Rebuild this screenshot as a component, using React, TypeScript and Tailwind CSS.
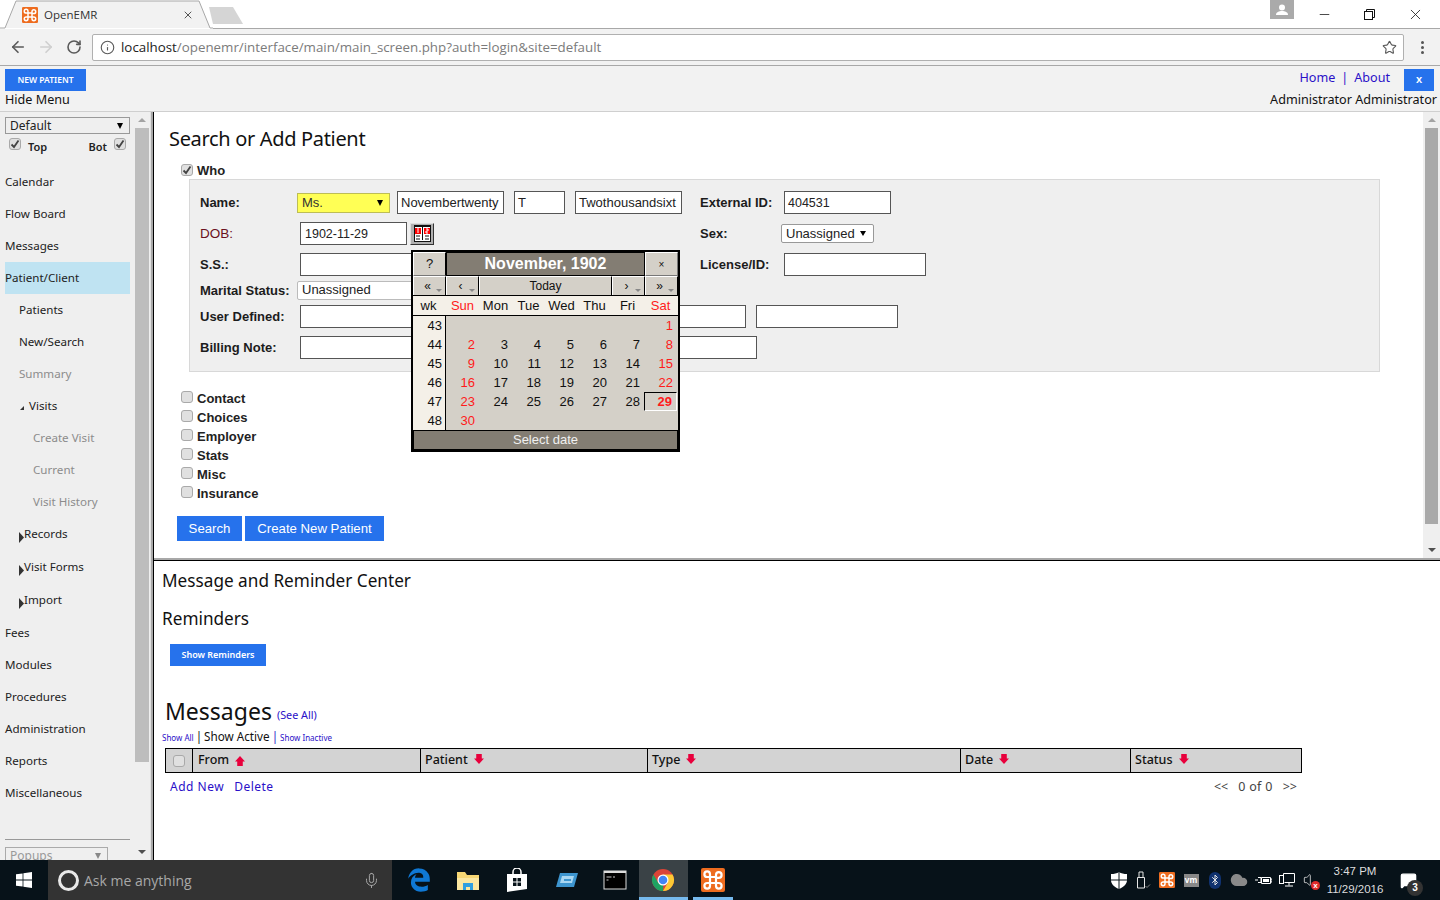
import { ReactNode } from "react";
import { FaEdgeLegacy } from "react-icons/fa";
import {
  ArrowLeft,
  ArrowRight,
  Bluetooth,
  Cloud,
  Info,
  Mic,
  MessageSquare,
  Minus,
  RotateCw,
  Star,
  Volume,
  X,
} from "lucide-react";

const ubuntu = "font-['Noto_Sans',sans-serif]";
const arial = "font-['Liberation_Sans',Arial,sans-serif]";

const weeks = [
  ["43", "", "", "", "", "", "", "1"],
  ["44", "2", "3", "4", "5", "6", "7", "8"],
  ["45", "9", "10", "11", "12", "13", "14", "15"],
  ["46", "16", "17", "18", "19", "20", "21", "22"],
  ["47", "23", "24", "25", "26", "27", "28", "29"],
  ["48", "30", "", "", "", "", "", ""],
];

const Check = ({ on = false }: { on?: boolean }) => (
  <span className="flex h-[12px] w-[12px] shrink-0 items-center justify-center rounded-[3px] border border-[#a9a9a9] bg-[#e0e0e0]">
    {on && (
      <svg width="10" height="10" viewBox="0 0 10 10">
        <path d="M1.5 5.5 4 8l4.5-6.5" fill="none" stroke="#444" strokeWidth="1.8" />
      </svg>
    )}
  </span>
);

const NavRow = ({
  label,
  indent = 0,
  muted = false,
  active = false,
  arrow = false,
  h = "h-[32px]",
}: {
  label: string;
  indent?: number;
  muted?: boolean;
  active?: boolean;
  arrow?: boolean;
  h?: string;
}) => {
  const pad =
    indent === 0 ? "pl-[5px]" : indent === 1 ? "pl-[19px]" : "pl-[33px]";
  return (
    <div
      className={`flex ${h} w-[125px] shrink-0 items-center ${active ? "pl-0" : pad} text-[11.6px] ${
        muted ? "text-[#8c8c8c]" : "text-[#222]"
      } ${active ? "bg-[#bfe3f2]" : ""}`}
    >
      {arrow && (
        <svg width="5" height="11" viewBox="0 0 5 11" className="mt-[5px] shrink-0">
          <path d="M0 0l5 5.5L0 11z" fill="#333" />
        </svg>
      )}
      <span className={arrow ? "-mt-[2px]" : ""}>{label}</span>
    </div>
  );
};

const Scrollbar = ({ thumb, wide = false }: { thumb: string; wide?: boolean }) => (
  <div className={`flex h-full shrink-0 flex-col items-center bg-[#efefef] ${wide ? "w-[17px]" : "w-[14px]"}`}>
    <span className="mt-[6px] h-0 w-0 border-x-[4px] border-b-[4px] border-x-transparent border-b-[#a3a3a3]" />
    <div className={`mt-[6px] ${thumb}`} />
    <span className="mt-auto mb-[6px] h-0 w-0 border-x-[4px] border-t-[4px] border-x-transparent border-t-[#505050]" />
  </div>
);

const Input = ({
  value = "",
  w,
  size = "pl-[3px] text-[13px]",
}: {
  value?: string;
  w: string;
  size?: string;
}) => (
  <span
    className={`flex h-[23px] ${w} shrink-0 items-center border border-[#555] bg-white ${size} text-[#222]`}
  >
    {value}
  </span>
);

const Label = ({
  children,
  red = false,
  low = false,
}: {
  children: ReactNode;
  red?: boolean;
  low?: boolean;
}) => (
  <span
    className={`w-[100px] shrink-0 ${low ? "pt-[2px]" : ""} ${
      red ? "text-[13.5px] text-[#6b1020]" : "text-[13px] font-bold text-[#1c1c1c]"
    }`}
  >
    {children}
  </span>
);

const Calendar = () => (
  <div
    className={`absolute top-[138px] left-[257px] w-[269px] border-2 border-black bg-[#d4d0c8] ${arial} text-[13px] text-[#111]`}
  >
    <div className="flex h-[24px]">
      <div className="flex w-[33px] items-center justify-center border border-t-white border-r-black border-b-[#777] border-l-white">?</div>
      <div className="flex flex-1 items-center justify-center border border-black bg-[#837d73] text-[16px] font-bold text-white">
        November, 1902
      </div>
      <div className="flex w-[33px] items-center justify-center border border-t-white border-r-[#777] border-b-[#777] border-l-white text-[10px]">×</div>
    </div>
    <div className="flex h-[20px] border-b border-black text-[12px]">
      {["«", "‹"].map((s) => (
        <div key={s} className="relative flex w-[33px] items-center justify-center border border-b-0 border-t-white border-r-black border-l-white pr-[4px]">
          {s}
          <span className="absolute right-[3px] bottom-[3px] h-0 w-0 border-x-[3px] border-t-[3px] border-x-transparent border-t-[#888]" />
        </div>
      ))}
      <div className="flex flex-1 items-center justify-center border border-b-0 border-t-white border-r-black border-l-white">Today</div>
      {["›", "»"].map((s) => (
        <div key={s} className="relative flex w-[33px] items-center justify-center border border-b-0 border-t-white border-r-black border-l-white pr-[4px]">
          {s}
          <span className="absolute right-[3px] bottom-[3px] h-0 w-0 border-x-[3px] border-t-[3px] border-x-transparent border-t-[#888]" />
        </div>
      ))}
    </div>
    <div className="flex h-[20px] items-center border-b border-black bg-[#f4f0e8]">
      <span className="w-[31px] text-center">wk</span>
      <span className="w-[2px]" />
      {["Sun", "Mon", "Tue", "Wed", "Thu", "Fri", "Sat"].map((d) => (
        <span key={d} className={`w-[33px] text-center ${d === "Sun" || d === "Sat" ? "text-[#ff1a1a]" : ""}`}>
          {d}
        </span>
      ))}
    </div>
    {weeks.map((row) => (
      <div key={row[0]} className="flex h-[19px]">
        {row.map((c, i) => (
          <span
            key={i}
            className={
              i === 0
                ? "flex w-[33px] items-center justify-end border-r border-black bg-[#f4f0e8] pr-[3px]"
                : `flex w-[33px] items-center justify-end pr-[4px] ${i === 1 || i === 7 ? "text-[#ff1a1a]" : ""} ${
                    c === "29" ? "border border-t-black border-r-white border-b-white border-l-black font-bold" : ""
                  }`
            }
          >
            {c}
          </span>
        ))}
      </div>
    ))}
    <div className="flex h-[20px] items-center justify-center border border-black bg-[#837d73] text-[#f0f0f0]">Select date</div>
  </div>
);

const SearchForm = () => (
  <div className="relative flex h-full min-w-0 flex-1 flex-col">
    <h1 className={`mt-[13px] ml-[15px] text-[20px] leading-[27px] tracking-[-0.33px] text-[#111] ${ubuntu}`}>
      Search or Add Patient
    </h1>
    <div className={`mt-[11px] ml-[27px] flex h-[16px] items-center gap-[4px] text-[13px] font-bold text-[#222] ${arial}`}>
      <span className="-mt-[3px]">
        <Check on />
      </span>
      Who
    </div>
    <div className={`ml-[35px] flex h-[193px] w-[1191px] flex-col border border-[#d8d8d8] bg-[#efefef] pl-[10px] ${arial}`}>
      <div className="mt-[11px] flex h-[23px] items-center">
        <Label>Name:</Label>
        <span className="-ml-[3px] flex h-[20px] w-[93px] items-center justify-between border border-[#bdbd55] bg-[#ffff55] pr-[6px] pl-[4px] text-[13px] text-[#333]">
          Ms.
          <span className="h-0 w-0 border-x-[3.5px] border-t-[6px] border-x-transparent border-t-black" />
        </span>
        <span className="ml-[7px] flex gap-[10px]">
          <Input w="w-[107px]" value="Novembertwenty" />
          <Input w="w-[51px]" value="T" />
          <Input w="w-[107px]" value="Twothousandsixt" />
        </span>
        <span className="ml-[18px] w-[84px] text-[13px] font-bold text-[#1c1c1c]">External ID:</span>
        <Input w="w-[107px]" value="404531" size="pl-[3px] pt-[1px] text-[12.5px]" />
      </div>
      <div className="mt-[8px] flex h-[23px] items-center">
        <Label red low>DOB:</Label>
        <Input w="w-[107px]" value="1902-11-29" size="pl-[4px] pt-[1px] text-[12.5px]" />
        <span className="ml-[3px] flex h-[22px] w-[24px] items-center justify-center border border-t-[#ddd] border-r-[#333] border-b-[#333] border-l-[#ddd] bg-[#b0b0b0]">
          <svg width="17" height="17" viewBox="0 0 17 17">
            <rect width="17" height="17" fill="#111" />
            <rect x="1" y="2" width="15" height="14" fill="#fff" />
            <rect x="1" y="3" width="6" height="6" fill="#f00" />
            <rect x="10" y="3" width="6" height="6" fill="#f00" />
            <path d="M4 3v5M12 4h2v2h-2v2h2" stroke="#fff" fill="none" />
            <path d="M2 11h4M2 14h4M11 11h4M11 14h4M8.500 2v13" stroke="#111" />
          </svg>
        </span>
        <span className="ml-[266px] w-[81px] text-[13px] font-bold text-[#1c1c1c]">Sex:</span>
        <span className="flex h-[19px] w-[93px] items-center justify-between rounded-[2px] border border-[#999] bg-white pr-[7px] pl-[4px] text-[13px] text-[#222]">
          Unassigned
          <span className="h-0 w-0 border-x-[3px] border-t-[5px] border-x-transparent border-t-black" />
        </span>
      </div>
      <div className="mt-[8px] flex h-[23px] items-center">
        <Label>S.S.:</Label>
        <Input w="w-[142px]" />
        <span className="ml-[258px] w-[84px] text-[13px] font-bold text-[#1c1c1c]">License/ID:</span>
        <Input w="w-[142px]" />
      </div>
      <div className="mt-[4px] flex h-[20px] items-center">
        <Label low>Marital Status:</Label>
        <span className="-ml-[3px] flex h-[19px] w-[142px] items-center rounded-[2px] border border-[#bbb] bg-white px-[4px] text-[13px] text-[#222]">
          Unassigned
        </span>
      </div>
      <div className="mt-[5px] flex h-[23px] items-center">
        <Label>User Defined:</Label>
        <Input w="w-[142px]" />
        <span className="ml-[162px] flex gap-[10px]">
          <Input w="w-[142px]" />
          <Input w="w-[142px]" />
        </span>
      </div>
      <div className="mt-[8px] flex h-[23px] items-center">
        <Label>Billing Note:</Label>
        <Input w="w-[457px]" />
      </div>
    </div>
    <div className={`mt-[17px] ml-[27px] flex flex-col text-[13px] font-bold text-[#222] ${arial}`}>
      {["Contact", "Choices", "Employer", "Stats", "Misc", "Insurance"].map((s) => (
        <div key={s} className="flex h-[19px] items-center gap-[4px]">
          <span className="-mt-[3px]">
            <Check />
          </span>
          {s}
        </div>
      ))}
    </div>
    <div className={`mt-[13px] ml-[23px] flex gap-[3px] text-[13.2px] text-white ${arial}`}>
      <span className="flex h-[25px] w-[65px] items-center justify-center bg-[#2672ec]">Search</span>
      <span className="flex h-[25px] w-[139px] items-center justify-center bg-[#2672ec]">Create New Patient</span>
    </div>
    <Calendar />
  </div>
);

const columns = [
  { name: "From", w: "w-[228px] pl-[5px]", up: true },
  { name: "Patient", w: "w-[227px] pl-[4px]" },
  { name: "Type", w: "w-[313px] pl-[4px]" },
  { name: "Date", w: "w-[170px] pl-[4px]" },
  { name: "Status", w: "flex-1 pl-[4px]" },
];

const SortArrow = ({ up = false }: { up?: boolean }) => (
  <svg width="10" height="10" viewBox="0 0 9 9" className={up ? "ml-[6px]" : "mb-[3px] ml-[6px]"}>
    <path d={up ? "M4.5 0 9 5H7v4H2V5H0z" : "M2 0h5v4h2L4.5 9 0 4h2z"} fill="#e8003c" />
  </svg>
);

const MessageCenter = () => (
  <div className={`flex h-full flex-col ${ubuntu} text-[#111]`}>
    <h2 className="mt-[8px] ml-[8px] text-[17.2px] leading-[24px]">Message and Reminder Center</h2>
    <h2 className="mt-[14px] ml-[8px] text-[17.2px] leading-[24px]">Reminders</h2>
    <span className="mt-[13px] ml-[16px] flex h-[22px] w-[96px] items-center justify-center bg-[#2672ec] text-[9px] font-semibold text-white">
      Show Reminders
    </span>
    <div className="mt-[30px] ml-[11px] flex h-[30px] items-end">
      <span className="text-[23px] leading-[30px]">Messages</span>
      <span className="mb-[3px] ml-[5px] text-[10.8px] text-[#2a10c8]">(See All)</span>
    </div>
    <div className="mt-[3px] ml-[8px] flex h-[16px] items-center text-[11.7px]">
      <span className="mt-[1px] text-[8px] text-[#2a10c8]">Show All</span>
      <span className="mx-[2px]">|</span>
      Show Active
      <span className="mx-[2px] text-[#2a10c8]">|</span>
      <span className="mt-[1px] text-[8px] text-[#2a10c8]">Show Inactive</span>
    </div>
    <div className="mt-[3px] ml-[11px] flex h-[25px] w-[1137px] items-center border border-black bg-[#d3d3d3] text-[12.5px] font-medium">
      <span className="flex h-full w-[27px] shrink-0 items-center justify-center border-r border-black">
        <Check />
      </span>
      {columns.map((c, i) => (
        <span
          key={c.name}
          className={`flex h-full ${c.w} shrink-0 items-center ${i < columns.length - 1 ? "border-r border-black" : ""}`}
        >
          {c.name}
          <SortArrow up={c.up} />
        </span>
      ))}
    </div>
    <div className="mt-[5px] ml-[16px] flex w-[1127px] justify-between text-[12px] text-[#2a10c8]">
      <span className="flex gap-[10px] tracking-[0.5px]">
        <span>Add New</span>
        <span>Delete</span>
      </span>
      <span className="flex gap-[10px] text-[12.5px] text-[#444]">
        <span>&lt;&lt;</span>
        <span className="tracking-[0.3px]">0 of 0</span>
        <span>&gt;&gt;</span>
      </span>
    </div>
  </div>
);

const Sidebar = () => (
  <aside className="flex h-full w-[150px] shrink-0 bg-[#efefef]">
    <div className={`flex w-[135px] shrink-0 flex-col ${ubuntu}`}>
      <div className="mt-[5px] ml-[5px] flex h-[17px] w-[125px] items-center justify-between border border-[#999] pr-[6px] pl-[4px] text-[12px] text-[#222]">
        Default
        <span className="h-0 w-0 border-x-[3px] border-t-[6px] border-x-transparent border-t-black" />
      </div>
      <div className="mt-[4px] ml-[9px] flex h-[14px] w-[117px] items-start justify-between text-[11px] font-semibold text-[#222]">
        <span className="flex gap-[7px]">
          <Check on />
          <span className="mt-[1px]">Top</span>
        </span>
        <span className="flex gap-[7px]">
          <span className="mt-[1px]">Bot</span>
          <Check on />
        </span>
      </div>
      <div className="mt-[14px] flex flex-col">
        <NavRow label="Calendar" />
        <NavRow label="Flow Board" />
        <NavRow label="Messages" />
        <div className="ml-[5px]">
          <NavRow label="Patient/Client" active />
        </div>
        <NavRow label="Patients" indent={1} />
        <NavRow label="New/Search" indent={1} />
        <NavRow label="Summary" indent={1} muted />
        <div className="flex h-[32px] items-center pl-[19px] text-[11.6px] text-[#222]">
          <svg width="5" height="5" viewBox="0 0 5 5" className="mt-[3px] mr-[5px]">
            <path d="M5 1v4H1z" fill="#333" />
          </svg>
          Visits
        </div>
        <NavRow label="Create Visit" indent={2} muted />
        <NavRow label="Current" indent={2} muted />
        <NavRow label="Visit History" indent={2} muted />
        <div className="pl-[14px]">
          <NavRow label="Records" arrow h="h-[33px]" />
        </div>
        <div className="pl-[14px]">
          <NavRow label="Visit Forms" arrow h="h-[33px]" />
        </div>
        <div className="pl-[14px]">
          <NavRow label="Import" arrow h="h-[33px]" />
        </div>
        <NavRow label="Fees" />
        <NavRow label="Modules" />
        <NavRow label="Procedures" />
        <NavRow label="Administration" />
        <NavRow label="Reports" />
        <NavRow label="Miscellaneous" />
      </div>
      <div className="mt-[30px] ml-[5px] w-[125px] border-t border-[#999]" />
      <div className="mt-[7px] ml-[5px] flex h-[17px] w-[103px] shrink-0 items-center justify-between border border-[#aaa] pr-[6px] pl-[4px] text-[12px] text-[#999]">
        Popups
        <span className="h-0 w-0 border-x-[3px] border-t-[6px] border-x-transparent border-t-[#888]" />
      </div>
    </div>
    <Scrollbar thumb="h-[634px] w-full bg-[#bdbdbd]" />
  </aside>
);

const TaskIcon = ({ children, active = false }: { children: ReactNode; active?: boolean }) => (
  <span
    className={`flex h-full w-[48.8px] shrink-0 items-center justify-center border-b-[3px] pt-[3px] ${
      active ? "border-[#76b9ed] bg-[#3a4246]" : "border-transparent"
    }`}
  >
    {children}
  </span>
);

const Tray = ({ children }: { children: ReactNode }) => (
  <span className="flex w-[24px] shrink-0 items-center justify-center">{children}</span>
);

const Xampp = ({ size = 24 }: { size?: number }) => (
  <svg width={size} height={size} viewBox="0 0 24 24">
    <rect width="24" height="24" rx="2" fill="#ee6c1f" />
    <path
      d="M9 9h6v6H9zM15 9V7a2.800 2.800 0 1 1 2.800 2.800H15M15 15h2.800A2.800 2.800 0 1 1 15 17.800V15M9 15v2.800A2.800 2.800 0 1 1 6.200 15H9M9 9H6.200A2.800 2.800 0 1 1 9 6.200V9"
      fill="none"
      stroke="#fff"
      strokeWidth="2.2"
    />
  </svg>
);

const Taskbar = () => (
  <footer className="flex h-[40px] w-[1440px] shrink-0 items-center bg-[#071219] text-white">
    <span className="flex h-full w-[48px] shrink-0 items-center justify-center">
      <svg width="16" height="16" viewBox="0 0 16 16" fill="#fff">
        <path d="M0 2.3 6.6 1.4V7.6H0zM7.4 1.3 16 0V7.6H7.4zM0 8.4H6.6V14.6L0 13.7zM7.4 8.4H16V16L7.4 14.7z" />
      </svg>
    </span>
    <div className="flex h-full w-[344px] shrink-0 items-center bg-[#333333] pr-[12px] pl-[10px] font-['Open_Sans',sans-serif] text-[14px] text-[#a8a8a8]">
      <span className="mr-[5px] h-[21px] w-[21px] rounded-full border-[3px] border-[#e8e8e8]" />
      Ask me anything
      <Mic size={17} strokeWidth={1.4} className="ml-auto text-[#a8a8a8]" />
    </div>
    <span className="flex h-full items-center pl-[3px]">
      <TaskIcon>
        <FaEdgeLegacy size={24} className="text-[#0f78d4]" />
      </TaskIcon>
      <TaskIcon>
        <svg width="24" height="22" viewBox="0 0 24 22">
          <path d="M1 3h8l2 3h12v15H1z" fill="#f7d774" />
          <rect x="1" y="9" width="22" height="12" fill="#fbe7a1" />
          <path d="M7 21v-7h10v7h-3v-3h-4v3z" fill="#2f9fe0" />
        </svg>
      </TaskIcon>
      <TaskIcon>
        <svg width="22" height="24" viewBox="0 0 22 24">
          <path d="M7 7V4a4 4 0 0 1 8 0v3" fill="none" stroke="#fff" strokeWidth="1.5" />
          <path d="M1 6h20v15l-20 3z" fill="#fff" />
          <path d="M7 10h3.500v3.500H7zM11.500 10H15v3.500h-3.500zM7 14.500h3.500V18H7zM11.500 14.500H15V18h-3.500z" fill="#071219" />
        </svg>
      </TaskIcon>
      <TaskIcon>
        <svg width="24" height="18" viewBox="0 0 24 18">
          <path d="M6 2h18l-4 14H2z" fill="#3d95cf" />
          <path d="M8 5h12l-2 7H6z" fill="#a9d7f2" />
          <path d="M10 8h7v2h-7z" fill="#3d95cf" />
        </svg>
      </TaskIcon>
      <TaskIcon>
        <svg width="24" height="20" viewBox="0 0 24 20">
          <rect x="1" y="1" width="22" height="18" fill="#000" stroke="#ddd" />
          <rect x="1" y="1" width="22" height="2" fill="#ddd" />
          <path d="M3.500 7h5M10 7h2M3.500 10h2" stroke="#ccc" />
        </svg>
      </TaskIcon>
      <TaskIcon active>
        <svg width="24" height="24" viewBox="0 0 24 24">
          <circle cx="12" cy="12" r="11" fill="#db4437" />
          <path d="M21.530 6.500A11 11 0 0 1 12 23l4.760-8.250L12 6.500z" fill="#fcc934" />
          <path d="M12 23A11 11 0 0 1 2.470 6.500l4.770 8.250 5 2.500z" fill="#1ea362" />
          <circle cx="12" cy="12" r="5.500" fill="#fff" />
          <circle cx="12" cy="12" r="4.300" fill="#4285f4" />
        </svg>
      </TaskIcon>
      <span className="ml-[5px] flex h-full w-[40px] shrink-0 items-center justify-center border-b-[3px] border-[#76b9ed] pt-[3px]">
        <Xampp />
      </span>
    </span>
    <div className="ml-auto flex h-full items-center pr-[18px]">
      <span className="flex items-center text-[#e6e6e6]">
        <Tray>
          <svg width="16" height="17" viewBox="0 0 16 17">
            <path d="M8 0c2 1.500 5 2 8 2v6c0 4-3 7-8 9-5-2-8-5-8-9V2c3 0 6-.5 8-2z" fill="#fff" />
            <path d="M8 0v17M0 8h16" stroke="#071219" strokeWidth="1" />
          </svg>
        </Tray>
        <Tray>
          <svg width="16" height="18" viewBox="0 0 16 18" fill="none" stroke="#e6e6e6">
            <path d="M2.500 6.500h7V17h-7zM4 6.500V1h4v5.500" />
            <path d="M10.500 15l1.500 1.500 3-3" stroke="#888" />
          </svg>
        </Tray>
        <Tray>
          <Xampp size={16} />
        </Tray>
        <Tray>
          <span className="flex h-[13px] w-[15px] items-center justify-center bg-[#888] text-[8px] leading-none font-bold text-white">vm</span>
        </Tray>
        <Tray>
          <span className="flex h-[17px] w-[12px] items-center justify-center rounded-full bg-[#10326f]">
            <Bluetooth size={12} strokeWidth={2} />
          </span>
        </Tray>
        <Tray>
          <Cloud size={18} fill="#8a8a8a" className="text-[#8a8a8a]" />
        </Tray>
        <Tray>
          <svg width="17" height="12" viewBox="0 0 17 12" fill="none" stroke="#fff">
            <path d="M6.500 3.500h9v6h-9zM15.500 5h1.500v3h-1.500M0 6h3M3 3.500h3v5H3" />
            <rect x="8" y="5" width="6" height="3" fill="#fff" stroke="none" />
          </svg>
        </Tray>
        <Tray>
          <svg width="16" height="14" viewBox="0 0 16 14" fill="none" stroke="#fff">
            <path d="M4.500 2.500V.5h11v9h-10M10 9.500v3M6 13h8" />
            <rect x=".5" y="2.500" width="4" height="8" />
          </svg>
        </Tray>
        <Tray>
          <span className="relative flex">
            <Volume size={16} strokeWidth={1.2} />
            <span className={`absolute -right-[1px] -bottom-[2px] flex h-[9px] w-[9px] items-center justify-center rounded-full bg-[#e02b2b] text-[8px] leading-none font-bold text-white ${arial}`}>
              x
            </span>
          </span>
        </Tray>
      </span>
      <span className={`ml-[1px] flex w-[62px] flex-col items-center text-[11.5px] leading-[18px] text-[#ddd] ${arial}`}>
        <span>3:47 PM</span>
        <span>11/29/2016</span>
      </span>
      <span className="relative ml-[8px] flex w-[28px] justify-center">
        <MessageSquare size={17} fill="#fff" />
        <span className={`absolute -right-[1px] -bottom-[7px] flex h-[16px] w-[16px] items-center justify-center rounded-full bg-[#333] text-[10px] font-bold text-white ${arial}`}>
          3
        </span>
      </span>
    </div>
  </footer>
);

const BrowserChrome = () => (
  <>
    <div className="relative flex h-[29px] shrink-0 bg-white font-['Open_Sans',sans-serif] text-[11.5px] text-[#333]">
      <div className="relative flex h-[29px] w-[209px] shrink-0 items-center pr-[15px] pl-[22px]">
        <svg width="213" height="29" viewBox="0 0 213 29" className="absolute top-0 left-0">
          <path d="M0 28h5L16 1h183l11 27h3" fill="#f2f2f2" stroke="#a8a8a8" />
        </svg>
        <span className="relative flex items-center gap-[6px]">
          <Xampp size={16} />
          OpenEMR
        </span>
        <X size={12} strokeWidth={2} className="relative ml-auto text-[#555]" />
      </div>
      <div className="relative w-[35px] shrink-0 pt-[28px]">
        <div className="ml-[4px] border-t border-[#a8a8a8]" />
        <svg width="35" height="29" viewBox="0 0 35 29" className="absolute top-0 left-0">
          <path d="M0 7h24l10 17H4z" fill="#d5d5d5" />
        </svg>
      </div>
      <div className="mt-[28px] flex-1 border-t border-[#a8a8a8]" />
      <div className="absolute top-0 right-0 flex h-[28px] items-start bg-white">
        <span className="flex h-[19px] w-[24px] items-center justify-center bg-[#aaa]">
          <svg width="12" height="12" viewBox="0 0 12 12" fill="#fff">
            <circle cx="6" cy="3.500" r="3" />
            <path d="M0 11c0-3 3-4 6-4s6 1 6 4z" />
          </svg>
        </span>
        <span className="flex h-[28px] w-[146px] items-center justify-between pr-[16px] pl-[23px] text-[#222]">
          <Minus size={15} strokeWidth={1.3} />
          <svg width="11" height="11" viewBox="0 0 11 11" fill="none" stroke="#111">
            <path d="M2.500 2.500V.5h8v8h-2" />
            <rect x=".5" y="2.500" width="8" height="8" />
          </svg>
          <X size={17} strokeWidth={1.2} />
        </span>
      </div>
    </div>
    <div className="flex h-[37px] shrink-0 items-center border-b border-[#a8a8a8] bg-[#f2f2f2] pl-[9px] text-[#5a5a5a]">
      <ArrowLeft size={18} strokeWidth={2.2} />
      <ArrowRight size={18} strokeWidth={2.2} className="ml-[10px] text-[#cfcfcf]" />
      <RotateCw size={16} strokeWidth={2.4} className="ml-[11px]" />
      <div className="ml-[10px] flex h-[27px] w-[1312px] items-center rounded-[2px] border border-[#b0b0b0] bg-white pr-[6px] pl-[7px] font-['Open_Sans',sans-serif] text-[13.33px]">
        <Info size={15} strokeWidth={1.8} />
        <span className="mt-[1px] ml-[6px] text-[#222]">localhost</span>
        <span className="mt-[1px] text-[#7b7b7b]">/openemr/interface/main/main_screen.php?auth=login&amp;site=default</span>
        <Star size={15} strokeWidth={1.8} className="ml-auto" />
      </div>
      <span className="ml-[17px] flex flex-col gap-[2px]">
        <i className="h-[3px] w-[3px] rounded-full bg-[#555]" />
        <i className="h-[3px] w-[3px] rounded-full bg-[#555]" />
        <i className="h-[3px] w-[3px] rounded-full bg-[#555]" />
      </span>
    </div>
  </>
);

const AppHeader = () => (
  <header className={`flex h-[46px] shrink-0 justify-between border-b border-[#cfcfcf] bg-[#f2f2f2] ${ubuntu}`}>
    <div className="flex flex-col pl-[5px]">
      <span className="mt-[3px] flex h-[22px] w-[81px] items-center justify-center bg-[#2672ec] text-[8.5px] font-semibold text-white">
        NEW PATIENT
      </span>
      <span className="text-[12.6px] leading-[17px] text-[#111]">Hide Menu</span>
    </div>
    <div className="flex flex-col items-end pr-[3px]">
      <div className="mt-[3px] flex h-[22px] items-center">
        <span className="mr-[14px] -mt-[4px] flex gap-[6px] text-[12.6px] text-[#2a10c8]">
          <span>Home</span>
          <span>|</span>
          <span>About</span>
        </span>
        <span className="mr-[3px] flex h-[22px] w-[30px] items-center justify-center bg-[#2672ec] pb-[1px] text-[11px] font-semibold text-white">x</span>
      </div>
      <span className="text-[12.6px] leading-[17px] text-[#111]">Administrator Administrator</span>
    </div>
  </header>
);

const App = () => {
  return (
    <div className="flex h-[900px] w-[1440px] flex-col overflow-hidden bg-white">
      <BrowserChrome />
      <AppHeader />
      <main className="flex min-h-0 flex-1">
        <Sidebar />
        <div className="w-[4px] shrink-0 border-r border-l border-r-black border-l-[#e0e0e0] bg-[#a8a8a8]" />
        <div className="flex min-w-0 flex-1 flex-col">
          <section className="flex h-[446px] shrink-0">
            <SearchForm />
            <Scrollbar wide thumb="h-[396px] w-[13px] bg-[#a9a9a9]" />
          </section>
          <div className="h-[3px] shrink-0 border-b border-black bg-[#a8a8a8]" />
          <section className="min-h-0 flex-1">
            <MessageCenter />
          </section>
        </div>
      </main>
      <Taskbar />
    </div>
  );
};

export default App;
